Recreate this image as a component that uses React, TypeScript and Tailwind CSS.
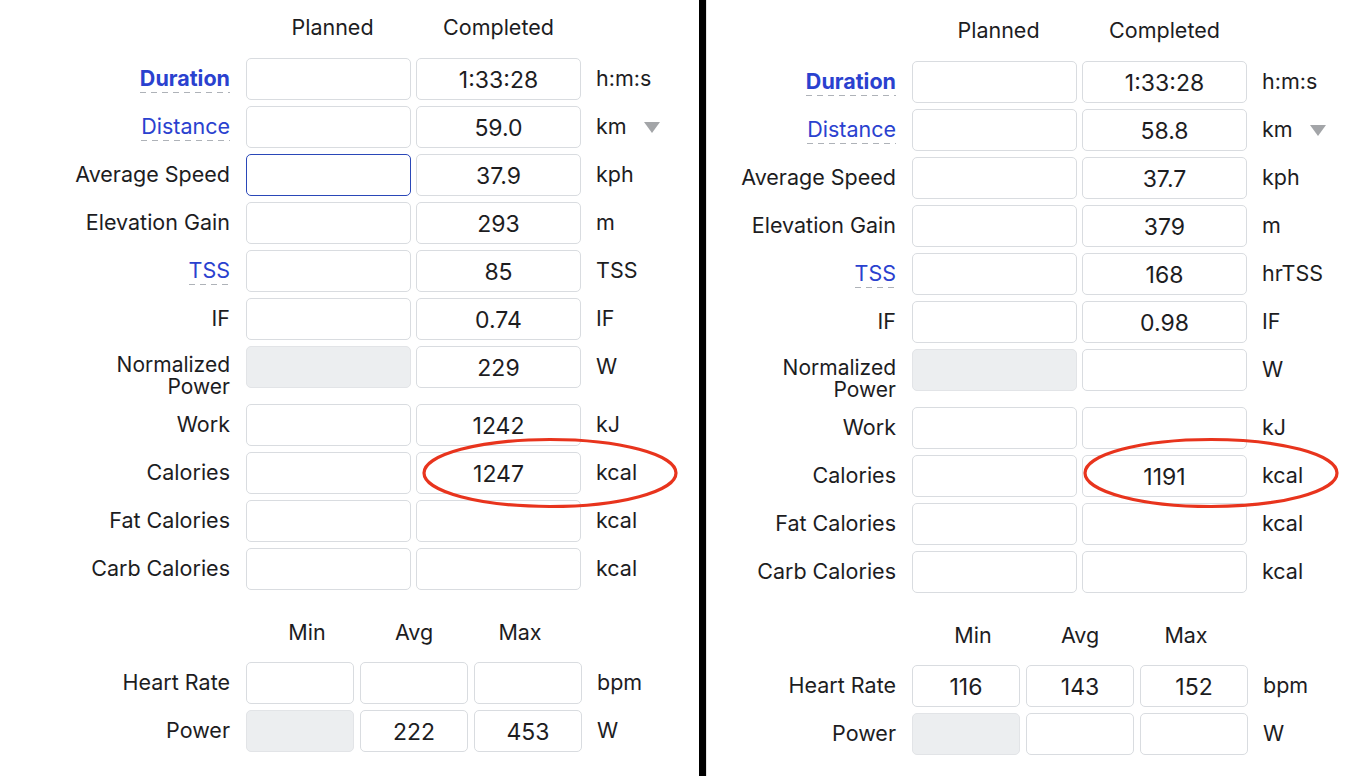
import React from "react";

type Row = {
  label: string;
  link?: boolean;
  bold?: boolean;
  planned?: string;
  plannedDisabled?: boolean;
  plannedFocus?: boolean;
  completed?: string;
  unit: string;
  dropdown?: boolean;
  twoLine?: boolean;
};

type Mini = { label: string; min?: string; minDisabled?: boolean; avg?: string; max?: string; unit: string };

const leftRows: Row[] = [
  { label: "Duration", link: true, bold: true, completed: "1:33:28", unit: "h:m:s" },
  { label: "Distance", link: true, completed: "59.0", unit: "km", dropdown: true },
  { label: "Average Speed", plannedFocus: true, completed: "37.9", unit: "kph" },
  { label: "Elevation Gain", completed: "293", unit: "m" },
  { label: "TSS", link: true, completed: "85", unit: "TSS" },
  { label: "IF", completed: "0.74", unit: "IF" },
  { label: "Normalized Power", twoLine: true, plannedDisabled: true, completed: "229", unit: "W" },
  { label: "Work", completed: "1242", unit: "kJ" },
  { label: "Calories", completed: "1247", unit: "kcal" },
  { label: "Fat Calories", unit: "kcal" },
  { label: "Carb Calories", unit: "kcal" },
];

const rightRows: Row[] = [
  { label: "Duration", link: true, bold: true, completed: "1:33:28", unit: "h:m:s" },
  { label: "Distance", link: true, completed: "58.8", unit: "km", dropdown: true },
  { label: "Average Speed", completed: "37.7", unit: "kph" },
  { label: "Elevation Gain", completed: "379", unit: "m" },
  { label: "TSS", link: true, completed: "168", unit: "hrTSS" },
  { label: "IF", completed: "0.98", unit: "IF" },
  { label: "Normalized Power", twoLine: true, plannedDisabled: true, unit: "W" },
  { label: "Work", unit: "kJ" },
  { label: "Calories", completed: "1191", unit: "kcal" },
  { label: "Fat Calories", unit: "kcal" },
  { label: "Carb Calories", unit: "kcal" },
];

const leftMini: Mini[] = [
  { label: "Heart Rate", unit: "bpm" },
  { label: "Power", minDisabled: true, avg: "222", max: "453", unit: "W" },
];
const rightMini: Mini[] = [
  { label: "Heart Rate", min: "116", avg: "143", max: "152", unit: "bpm" },
  { label: "Power", minDisabled: true, unit: "W" },
];

function Box({ value, disabled, focus, w }: { value?: string; disabled?: boolean; focus?: boolean; w: string }) {
  const base = "h-[42px] rounded-[5px] flex items-center justify-center text-[23px] text-[#1d1d1f] shrink-0 pt-[2px] ";
  const style = focus
    ? "border-[1.5px] border-[#2a47b8] bg-white"
    : disabled
    ? "border border-[#e2e4e7] bg-[#eceef0]"
    : "border border-[#d9dce0] bg-white";
  return <div className={base + w + " " + style}>{value ?? ""}</div>;
}

function Label({ row }: { row: Row }) {
  if (row.link) {
    return (
      <span className={"relative inline-block text-[#2a41cf] " + (row.bold ? "font-bold" : "")}>
        {row.label}
        <span className="absolute left-0 right-0 bottom-[-4px] h-[1.5px] bg-[repeating-linear-gradient(90deg,#aeb2b8_0px,#aeb2b8_6px,transparent_6px,transparent_11px)]" />
      </span>
    );
  }
  if (row.twoLine) {
    return (
      <span className="block text-[21px] leading-[22px]">
        <span className="block">Normalized</span>
        <span className="block">Power</span>
      </span>
    );
  }
  return <span>{row.label}</span>;
}

function Panel({
  rows,
  mini,
  labelW,
  topPad,
  ellipse,
}: {
  rows: Row[];
  mini: Mini[];
  labelW: string;
  topPad: string;
  ellipse: { left: number; top: number };
}) {
  return (
    <div className={"relative flex flex-col " + topPad}>
      <div className="flex h-[22px] leading-[22px] text-[21.5px] text-[#1d1d1f]">
        <div className={labelW + " shrink-0"} />
        <div className="ml-[16px] w-[165px] text-center pl-[8px]">Planned</div>
        <div className="ml-[5px] w-[165px] text-center">Completed</div>
      </div>

      <div className="mt-[20px] flex flex-col gap-[6px]">
        {rows.map((r) => (
          <div key={r.label} className="flex items-start text-[21.5px] leading-[22px] text-[#1d1d1f]">
            <div className={labelW + " shrink-0 text-right " + (r.twoLine ? "pt-[8px]" : "pt-[9px]")}>
              <Label row={r} />
            </div>
            <div className="ml-[16px]">
              <Box w="w-[165px]" value={r.planned} disabled={r.plannedDisabled} focus={r.plannedFocus} />
            </div>
            <div className="ml-[5px]">
              <Box w="w-[165px]" value={r.completed} />
            </div>
            <div className="ml-[15px] pt-[9px] flex items-center">
              <span>{r.unit}</span>
              {r.dropdown && (
                <svg className="ml-[17px] mt-[2px]" width="16" height="11" viewBox="0 0 16 11">
                  <path d="M0 0 L16 0 L8 11 Z" fill="#a3a5a8" />
                </svg>
              )}
            </div>
          </div>
        ))}
      </div>

      <div className="mt-[31px] flex h-[22px] leading-[22px] text-[21.5px] text-[#1d1d1f]">
        <div className={labelW + " shrink-0"} />
        <div className="ml-[16px] w-[108px] text-center pl-[14px]">Min</div>
        <div className="ml-[6px] w-[108px] text-center">Avg</div>
        <div className="ml-[6px] w-[108px] text-center pr-[16px]">Max</div>
      </div>

      <div className="mt-[19px] flex flex-col gap-[6px]">
        {mini.map((m) => (
          <div key={m.label} className="flex items-start text-[21.5px] leading-[22px] text-[#1d1d1f]">
            <div className={labelW + " shrink-0 text-right pt-[9px]"}>{m.label}</div>
            <div className="ml-[16px]">
              <Box w="w-[108px]" value={m.min} disabled={m.minDisabled} />
            </div>
            <div className="ml-[6px]">
              <Box w="w-[108px]" value={m.avg} />
            </div>
            <div className="ml-[6px]">
              <Box w="w-[108px]" value={m.max} />
            </div>
            <div className="ml-[15px] pt-[9px]">{m.unit}</div>
          </div>
        ))}
      </div>

      <svg
        className="absolute pointer-events-none"
        style={{ left: ellipse.left, top: ellipse.top }}
        width="260"
        height="74"
        viewBox="0 0 260 74"
      >
        <ellipse cx="130" cy="37" rx="126" ry="33.5" fill="none" stroke="#e8341d" strokeWidth="3.2" />
      </svg>
    </div>
  );
}

export default function App() {
  return (
    <div
      className="w-[1363px] h-[776px] flex bg-white overflow-hidden"
      style={{ fontFamily: "Inter, 'Noto Sans', sans-serif" }}
    >
      <div className="w-[699px] h-full shrink-0 bg-white">
        <Panel rows={leftRows} mini={leftMini} labelW="w-[230px]" topPad="pt-[16px]" ellipse={{ left: 420, top: 436 }} />
      </div>
      <div className="w-[7px] h-full shrink-0 bg-black" />
      <div className="flex-1 h-full bg-white border-l border-[#e4e4e4]">
        <Panel rows={rightRows} mini={rightMini} labelW="w-[189px]" topPad="pt-[19px]" ellipse={{ left: 374, top: 436 }} />
      </div>
    </div>
  );
}
